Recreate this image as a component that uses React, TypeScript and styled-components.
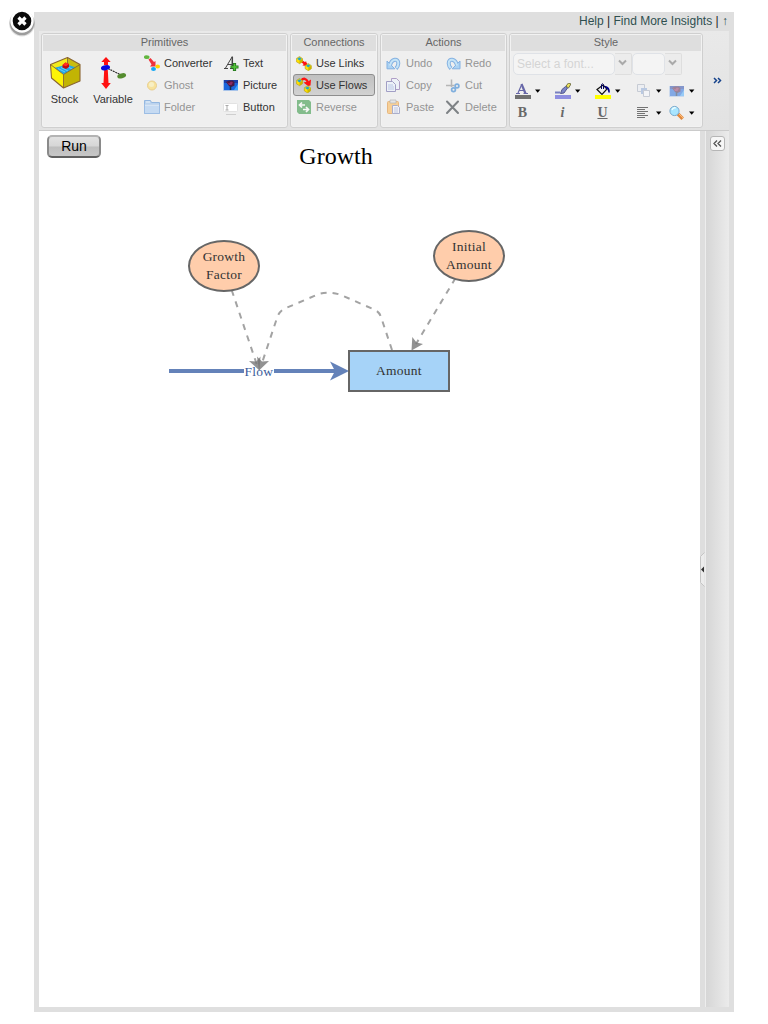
import React from "react";
import styled, { createGlobalStyle } from "styled-components";

const Global = createGlobalStyle`
  body { margin: 0; background: #fff; font-family: "Liberation Sans", Arial, sans-serif; }
  * { box-sizing: border-box; }
  svg { display: block; flex: none; }
`;

const Page = styled.div`
  position: relative;
  width: 768px;
  height: 1024px;
  padding: 12px 34px;
  overflow: hidden;
`;
const Close = styled.button`
  position: absolute;
  left: 7px;
  top: 7px;
  padding: 0;
  border: 0;
  background: none;
`;
const Frame = styled.div`
  width: 700px;
  height: 1000px;
  padding: 0 5px 5px;
  background: #dfdfdf;
  display: flex;
  flex-direction: column;
`;
const TopLinks = styled.div`
  height: 19px;
  line-height: 19px;
  padding-right: 2px;
  text-align: right;
  font-size: 12px;
  color: #222;
  white-space: pre;
`;
const Link = styled.a<{ $narrow?: boolean }>`
  color: #2f4f4f;
  letter-spacing: ${(p) => (p.$narrow ? "-1px" : "normal")};
`;
const Ribbon = styled.div`
  height: 100px;
  padding: 2px 0 0 2px;
  display: flex;
  gap: 2px;
  background: linear-gradient(#e9e9e9, #e2e2e2);
  border-bottom: 1px solid #cbcbcb;
`;
const Group = styled.section<{ $w: number }>`
  width: ${(p) => p.$w}px;
  height: 95px;
  padding: 1px;
  flex: none;
  border: 1px solid #cfcfcf;
  border-radius: 3px;
  background: #efefef;
  box-shadow: inset 0 0 0 1px #f2f2f2;
`;
const GroupTitle = styled.div`
  height: 16px;
  line-height: 15px;
  text-align: center;
  font-size: 11px;
  color: #666;
  background: #dedede;
`;
const Columns = styled.div<{ $pad?: number }>`
  display: flex;
  padding-top: 1px;
  padding-left: ${(p) => p.$pad ?? 0}px;
`;
const Column = styled.div<{ $w: number }>`
  width: ${(p) => p.$w}px;
  flex: none;
`;
const Tool = styled.button<{ $off?: boolean; $on?: boolean; $pad?: number }>`
  width: 100%;
  height: 22px;
  padding: 0 0 0 ${(p) => p.$pad ?? 3}px;
  display: flex;
  align-items: center;
  gap: 4px;
  border: 1px solid ${(p) => (p.$on ? "#8e8e8e" : "transparent")};
  border-radius: 3px;
  background: ${(p) => (p.$on ? "linear-gradient(#c0c0c0, #d2d2d2)" : "none")};
  color: ${(p) => (p.$off ? "#949494" : "#333")};
  font: 11px "Liberation Sans", Arial, sans-serif;
  white-space: nowrap;
  svg { opacity: ${(p) => (p.$off ? 0.55 : 1)}; }
`;
const BigTool = styled.button<{ $w: number }>`
  width: ${(p) => p.$w}px;
  height: 60px;
  padding: 4px 0 0;
  border: 0;
  background: none;
  display: flex;
  flex-direction: column;
  align-items: center;
  gap: 4px;
  flex: none;
  color: #333;
  font: 11px "Liberation Sans", Arial, sans-serif;
`;
const Combos = styled.div`
  display: flex;
  height: 22px;
  margin: 2px 0 5px 2px;
`;
const Field = styled.div<{ $w: number }>`
  width: ${(p) => p.$w}px;
  height: 22px;
  line-height: 21px;
  padding-left: 3px;
  border: 1px solid #dfe2e7;
  border-radius: 5px;
  background: #f4f4f4;
  color: #d4d4d4;
  font-size: 12px;
`;
const Trigger = styled.div`
  width: 17px;
  height: 22px;
  padding: 0 2px 2px 0;
  border: 1px solid #dedede;
  border-left: 0;
  border-radius: 0 2px 2px 0;
  background: #ececec;
  display: grid;
  place-items: center;
`;
const StyleRow = styled.div`
  height: 22px;
  padding: 0 0 0 4px;
  display: grid;
  grid-template-columns: 40px 40px 41px 33px 32px;
  align-items: center;
`;
const StyleTool = styled.div`
  display: flex;
  align-items: center;
  gap: 4px;
`;
const Letter = styled.span<{ $kind: "b" | "i" | "u" }>`
  width: 15px;
  text-align: center;
  color: #686868;
  font: bold 14px/16px "Liberation Serif", serif;
  font-style: ${(p) => (p.$kind === "i" ? "italic" : "normal")};
  text-decoration: ${(p) => (p.$kind === "u" ? "underline" : "none")};
`;
const More = styled.div`
  flex: 1;
  padding-bottom: 2px;
  display: grid;
  place-items: center;
`;
const Body = styled.div`
  flex: 1;
  display: flex;
`;
const Canvas = styled.main`
  position: relative;
  width: 661px;
  background: #fff;
`;
const RunButton = styled.button`
  position: absolute;
  left: 8px;
  top: 4px;
  width: 54px;
  height: 23px;
  padding: 0 0 1px;
  border: 2px solid #8a8a8a;
  border-top-color: #b4b4b4;
  border-bottom-color: #606060;
  border-radius: 5px;
  background: linear-gradient(#e2e2e2 0%, #d6d6d6 48%, #bebebe 52%, #c7c7c7 100%);
  color: #000;
  font: 14px/18px "Liberation Sans", Arial, sans-serif;
`;
const Heading = styled.div`
  position: absolute;
  left: 197px;
  top: 11px;
  width: 200px;
  text-align: center;
  color: #000;
  font: 24px/28px "Liberation Serif", serif;
`;
const Links = styled.svg`
  position: absolute;
  left: 0;
  top: 0;
`;
const Node = styled.div<{ $x: number; $y: number; $w: number; $h: number; $round?: boolean }>`
  position: absolute;
  left: ${(p) => p.$x}px;
  top: ${(p) => p.$y}px;
  width: ${(p) => p.$w}px;
  height: ${(p) => p.$h}px;
  display: grid;
  place-items: center;
  text-align: center;
  border: 2px solid #666;
  border-radius: ${(p) => (p.$round ? "50%" : "0")};
  background: ${(p) => (p.$round ? "#ffcdab" : "#a6d3f8")};
  color: #333;
  font: 13.5px/18px "Liberation Serif", serif;
  letter-spacing: 0.25px;
`;
const FlowLabel = styled.div`
  position: absolute;
  left: 205px;
  top: 233px;
  width: 30px;
  text-align: center;
  color: #3c5c9c;
  font: 13.5px/16px "Liberation Serif", serif;
  letter-spacing: 0.25px;
`;
const Splitter = styled.div`
  width: 6px;
  background: #dedede;
  border-right: 1px solid #ededed;
  display: flex;
  align-items: center;
`;
const SidePanel = styled.aside`
  flex: 1;
  padding: 5px 0 0 4px;
  background: linear-gradient(90deg, #d6d6d6, #ebebeb);
`;
const Expand = styled.button`
  width: 15px;
  height: 15px;
  padding: 0;
  display: grid;
  place-items: center;
  border: 1px solid #b6b6b6;
  border-radius: 3px;
  background: #f7f7f7;
`;

const StockIcon = () => (
  <svg width="32" height="33" viewBox="0 0 32 33" strokeLinejoin="round">
    <path d="M1.500 8.500 18.500 1.500V11L8 15.500Z" fill="#f2ea1c" />
    <path d="M18.500 1.500 31 8.500 25 15 18.500 11Z" fill="#c9bc10" />
    <path d="M5 12 18 8.500 28.500 12 14.500 18.500Z" fill="#22a7e6" />
    <path d="m9 12.500 7 3.500M12 11.500l7 3.500m-2-5 7 3.500" stroke="#7fd4f8" strokeWidth=".8" />
    <path d="M1.500 8.500 14.500 18.500V32L2.500 22Z" fill="#fdf405" />
    <path d="M14.500 18.500 31 8.500V25L14.500 32Z" fill="#c2b404" />
    <path d="M1.500 8.500 18.500 1.500 31 8.500V25L14.500 32 2.500 22Z" fill="none" stroke="#8a6532" strokeWidth="1.100" />
    <path d="M1.500 8.500 14.500 18.500 31 8.500M14.500 18.500V32M18.500 1.500V8" fill="none" stroke="#8a6532" strokeWidth=".9" />
    <path d="m13.500 9 3-2.500 3.500 1.500v3l-3 2-3.500-1.500Z" fill="#c50a0a" />
    <path d="m13.500 9 3-2.500 3.500 1.500-3 2.200Z" fill="#ff2d25" />
  </svg>
);
const VariableIcon = () => (
  <svg width="28" height="33" viewBox="0 0 28 33">
    <path d="m7 1 4.700 5H9v3H5V6H2.300Z" fill="#f11" />
    <path d="M5.200 14h3.600l.7 13h2.300L7 33 2.200 27h2.300Z" fill="#f11" />
    <path d="m9 12.500 12 6" stroke="#222" strokeWidth="1.100" strokeDasharray="2 .7" />
    <ellipse cx="6.500" cy="11.800" rx="4.600" ry="2.500" fill="#0909e0" transform="rotate(-12 6.500 11.800)" />
    <ellipse cx="22.700" cy="19.800" rx="4.500" ry="2.400" fill="#548c2e" transform="rotate(-14 22.700 19.800)" />
  </svg>
);
const ConverterIcon = () => (
  <svg width="16" height="16" viewBox="0 0 16 16">
    <ellipse cx="2.700" cy="2.200" rx="2.800" ry="1.900" fill="#62b63f" />
    <path d="m4.500 4.500 2-1.500 3.500 4 1.500-1v5.500H6l1.500-2Z" fill="#ee343b" />
    <ellipse cx="13.700" cy="11.500" rx="2.300" ry="1.900" fill="#ffd500" />
    <ellipse cx="9.500" cy="14" rx="2.500" ry="1.900" fill="#16a8f4" />
  </svg>
);
const GhostIcon = () => (
  <svg width="16" height="16" viewBox="0 0 16 16">
    <circle cx="8" cy="8.500" r="4.500" fill="#ffd95a" stroke="#e3b440" />
    <circle cx="7.500" cy="7.500" r="2.500" fill="#fff0a4" />
  </svg>
);
const FolderIcon = () => (
  <svg width="16" height="16" viewBox="0 0 16 16">
    <path d="M.5 14.500v-13h6l1 2h8v11Z" fill="#8fbdf0" stroke="#4a8ad4" />
    <path d="M.5 14.500v-9h15v9Z" fill="#a3c9f6" stroke="#5a95dc" />
    <path d="M1 6h14M2 3h4" stroke="#e8f4ff" />
  </svg>
);
const TextIcon = () => (
  <svg width="16" height="16" viewBox="0 0 16 16" fill="none">
    <path d="M1 13.500h4m2 0h3M2.500 13 9 2M5 9.500h4" stroke="#444" />
    <path d="M9.300 1.500v11" stroke="#444" strokeWidth="1.500" />
    <path d="M11.500 8v8M7.500 12h8" stroke="#23751d" strokeWidth="3.200" />
    <path d="M11.500 8.800v6.400M8.300 12h6.400" stroke="#55c43a" strokeWidth="1.600" />
  </svg>
);
const PictureIcon = () => (
  <svg width="16" height="16" viewBox="0 0 16 16">
    <path d="M1 3h14v10H1Z" fill="#1a66dc" />
    <path d="M1 3h14v3H1Z" fill="#1c3fa8" />
    <path d="m11 13 4-6v6Z" fill="#41a8ff" />
    <path d="M3 5 6 3.500h4l1.500 2v3L8.500 10 6 9Z" fill="#4a1a44" />
    <path d="m4 5 2 1.500L8 4.500l2 1L8.500 8H6Z" fill="#8d2a62" />
    <path d="M7.500 9v4" stroke="#172e50" strokeWidth="1.500" />
    <path d="M.5 3v10.500H15" fill="none" stroke="#a8c4ea" />
  </svg>
);
const ButtonIcon = () => (
  <svg width="16" height="16" viewBox="0 0 16 16">
    <rect x=".5" y="4.500" width="14" height="8" rx="1" fill="#fff" stroke="#e2e2e2" />
    <path d="M2.500 6.500h3M4 6.500v4.500M2.500 11h3" stroke="#aaa" fill="none" />
    <path d="M3 15.500h10" stroke="#cfcfcf" />
  </svg>
);
const Cube = ({ x, y }: { x: number; y: number }) => (
  <g transform={`translate(${x} ${y})`}>
    <path d="M.300 2 3.500 0l3 2v3.200L3.500 7.200.300 5.200Z" fill="#ffe000" stroke="#a08a20" strokeWidth=".5" />
    <path d="m1.200 2.300 2.300-1.500 2.200 1.500-2.200 1.800Z" fill="#1fa6cc" />
    <path d="m3.500 4.200 3-2v3l-3 2Z" fill="#c9b600" />
  </g>
);
const LinksIcon = () => (
  <svg width="16" height="16" viewBox="0 0 16 16">
    <path d="m4 5 7 5" stroke="#f11" strokeWidth="2.200" />
    <path d="m6.500 10.500 5 .5-1.500-5Z" fill="#f11" />
    <Cube x={0} y={1.500} />
    <Cube x={8.800} y={8.500} />
  </svg>
);
const FlowsIcon = () => (
  <svg width="16" height="16" viewBox="0 0 16 16">
    <path d="M5 3.500Q9-.5 12 5" stroke="#f11" strokeWidth="2.400" fill="none" />
    <path d="m7.500 5.500 4.500-1 3-2-.5 6-2.500.500Z" fill="#f11" />
    <Cube x={0} y={1.500} />
    <Cube x={8} y={8.700} />
  </svg>
);
const ReverseIcon = () => (
  <svg width="16" height="16" viewBox="0 0 16 16">
    <path d="M1 1h12l2 2v12H3l-2-2Z" fill="#2c943d" />
    <path d="M9 6H3.500M6 3.500 3.500 6 6 8.500M7 10.500h5.500M10 8l2.500 2.500L10 13" stroke="#fff" strokeWidth="1.700" fill="none" />
  </svg>
);
const UndoIcon = ({ flip }: { flip?: boolean }) => (
  <svg width="16" height="16" viewBox="0 0 16 16">
    <g transform={flip ? "translate(16 0) scale(-1 1)" : undefined} fill="none">
      <path d="M4 10.500C5.500 3.500 12.500 3 12.300 8.500 12.200 10.500 11.500 12 10 13.500" stroke="#2f80d8" strokeWidth="4" />
      <path d="M1 6v7.800h7.800Z" fill="#74bcf7" stroke="#2f80d8" />
      <path d="M4 10.500C5.500 3.500 12.500 3 12.300 8.500 12.200 10.500 11.500 12 10.300 13" stroke="#a4dcff" strokeWidth="2" />
    </g>
  </svg>
);
const CopyIcon = () => (
  <svg width="16" height="16" viewBox="0 0 16 16" fill="#edf3ff" stroke="#635ca3">
    <path d="M5.500 1.500h5l3 3v8h-8Z" stroke="#7d5fa8" />
    <path d="M.5 4.500h6l3 3v7h-9Z" />
    <path d="M2 8h5M2 10h6M2 12h6" stroke="#8ea9df" />
  </svg>
);
const PasteIcon = () => (
  <svg width="16" height="16" viewBox="0 0 16 16">
    <rect x="1.500" y="2.500" width="11" height="12" rx="1" fill="#ffb54e" stroke="#e08a28" />
    <path d="M4 1h6v3H4Z" fill="#ddd" stroke="#888" strokeWidth=".7" />
    <path d="M6.500 6.500h5l2 2v6h-7Z" fill="#f5f6ff" stroke="#737aaf" />
    <path d="M8 9h4M8 11h4M8 13h4" stroke="#97a5d1" />
  </svg>
);
const CutIcon = () => (
  <svg width="16" height="16" viewBox="0 0 16 16" fill="none">
    <path d="M6.500 2.500V10M1 8.500h8.500" stroke="#888" strokeWidth="1.500" />
    <circle cx="12" cy="9" r="1.900" stroke="#267bd0" strokeWidth="1.700" />
    <circle cx="8.500" cy="12.800" r="1.900" stroke="#267bd0" strokeWidth="1.700" />
  </svg>
);
const DeleteIcon = () => (
  <svg width="16" height="16" viewBox="0 0 16 16">
    <path d="m2 2.500 11 11.500M13 2.500 2 14" stroke="#222a30" strokeWidth="2" strokeLinecap="round" />
  </svg>
);
const Arrow = () => (
  <svg width="6" height="4" viewBox="0 0 6 4">
    <path d="M0 .500h5.400L2.700 3.700Z" fill="#000" />
  </svg>
);
const Chevron = () => (
  <svg width="9" height="8" viewBox="0 0 9 8">
    <path d="m1 1.500 3.500 3.500L8 1.500" fill="none" stroke="#aaa" strokeWidth="2" />
  </svg>
);
const FontColorIcon = () => (
  <svg width="16" height="16" viewBox="0 0 16 16" fill="none">
    <path d="M1 10.500h4m3.500 0h4.500M3 10 6.700 1.500M4.500 7.500h5" stroke="#6767a8" strokeWidth="1.200" />
    <path d="m6.500 1 4 9.500" stroke="#6767a8" strokeWidth="2.200" />
    <path d="M0 14h16" stroke="#707070" strokeWidth="4" />
  </svg>
);
const PenIcon = () => (
  <svg width="16" height="16" viewBox="0 0 16 16" fill="none">
    <path d="M0 9.500h5" stroke="#777fc0" strokeWidth="2" />
    <path d="m5.500 10.500 1.500-4 3.500-3 2 1.500-3.500 5Z" fill="#7d86c8" stroke="#50558d" />
    <path d="m11 3 2.500-3L16 1l-2.500 4Z" fill="#eee35d" stroke="#55552d" strokeWidth=".8" />
    <path d="M0 14h16" stroke="#8e8ee0" strokeWidth="4" />
  </svg>
);
const BucketIcon = () => (
  <svg width="16" height="16" viewBox="0 0 16 16" fill="none">
    <path d="m2 6.500 6-4.500 4 4-5 5.500Z" fill="#eee" stroke="#111" strokeWidth="1.200" />
    <path d="M6.500 6V1.500q1-1.500 2 0V6" stroke="#000060" />
    <path d="M10.500 3.500q4 .5 3.700 6L13 6l-1.500-1Z" fill="#000085" stroke="#000085" strokeWidth="1.200" />
    <path d="M0 14h16" stroke="#ff0" strokeWidth="4" />
  </svg>
);
const LayersIcon = () => (
  <svg width="16" height="16" viewBox="0 0 16 16">
    <path d="M1.500 1.500h7v7h-7Z" fill="#eceef2" stroke="#c6cbd4" />
    <path d="M5 5h6v6H5Z" fill="#b9c9e2" />
    <path d="M7.500 7.500h6v6h-6Z" fill="#f3f4f7" stroke="#c6cbd4" />
  </svg>
);
const AlignIcon = () => (
  <svg width="16" height="14" viewBox="0 0 16 14">
    <path d="M1 1.500h11M1 3.500h8M1 5.500h11M1 7.500h8M1 9.500h11M1 11.500h8" stroke="#737373" />
  </svg>
);
const SearchIcon = () => (
  <svg width="16" height="16" viewBox="0 0 16 16">
    <path d="m9 9 4.700 4.700" stroke="#e18a3e" strokeWidth="3.500" />
    <path d="m10 9 4 4" stroke="#ffbd7b" />
    <circle cx="5.500" cy="6" r="4.600" fill="#a8e5ff" stroke="#7aa9cc" />
    <path d="M3 5q1-3 4-2" stroke="#efffff" fill="none" strokeWidth="1.300" />
  </svg>
);
const FadedPicture = styled.span`
  opacity: 0.5;
`;

export default function App() {
  return (
    <Page>
      <Global />
      <Frame>
        <TopLinks>
          <Link>Help</Link> | <Link>Find More Insights</Link> | <Link $narrow>↑</Link>
        </TopLinks>
        <Ribbon>
          <Group $w={247}>
            <GroupTitle>Primitives</GroupTitle>
            <Columns>
              <BigTool $w={43}><StockIcon />Stock</BigTool>
              <BigTool $w={54}><VariableIcon />Variable</BigTool>
              <Column $w={79}>
                <Tool><ConverterIcon />Converter</Tool>
                <Tool $off><GhostIcon />Ghost</Tool>
                <Tool $off><FolderIcon />Folder</Tool>
              </Column>
              <Column $w={65}>
                <Tool><TextIcon />Text</Tool>
                <Tool><PictureIcon />Picture</Tool>
                <Tool><ButtonIcon />Button</Tool>
              </Column>
            </Columns>
          </Group>
          <Group $w={88}>
            <GroupTitle>Connections</GroupTitle>
            <Columns $pad={1}>
              <Column $w={82}>
                <Tool $pad={2}><LinksIcon />Use Links</Tool>
                <Tool $pad={2} $on><FlowsIcon />Use Flows</Tool>
                <Tool $pad={2} $off><ReverseIcon />Reverse</Tool>
              </Column>
            </Columns>
          </Group>
          <Group $w={127}>
            <GroupTitle>Actions</GroupTitle>
            <Columns>
              <Column $w={59}>
                <Tool $off><UndoIcon />Undo</Tool>
                <Tool $off><CopyIcon />Copy</Tool>
                <Tool $off><PasteIcon />Paste</Tool>
              </Column>
              <Column $w={62}>
                <Tool $off><UndoIcon flip />Redo</Tool>
                <Tool $off><CutIcon />Cut</Tool>
                <Tool $off><DeleteIcon />Delete</Tool>
              </Column>
            </Columns>
          </Group>
          <Group $w={194}>
            <GroupTitle>Style</GroupTitle>
            <Combos>
              <Field $w={102}>Select a font...</Field>
              <Trigger><Chevron /></Trigger>
              <Field $w={33} />
              <Trigger><Chevron /></Trigger>
            </Combos>
            <StyleRow>
              <StyleTool><FontColorIcon /><Arrow /></StyleTool>
              <StyleTool><PenIcon /><Arrow /></StyleTool>
              <StyleTool><BucketIcon /><Arrow /></StyleTool>
              <StyleTool><LayersIcon /><Arrow /></StyleTool>
              <StyleTool><FadedPicture><PictureIcon /></FadedPicture><Arrow /></StyleTool>
            </StyleRow>
            <StyleRow>
              <StyleTool><Letter $kind="b">B</Letter></StyleTool>
              <StyleTool><Letter $kind="i">i</Letter></StyleTool>
              <StyleTool><Letter $kind="u">U</Letter></StyleTool>
              <StyleTool><AlignIcon /><Arrow /></StyleTool>
              <StyleTool><SearchIcon /><Arrow /></StyleTool>
            </StyleRow>
          </Group>
          <More>
            <svg width="9" height="7" viewBox="0 0 9 7">
              <path d="m1 1 2.500 2.500L1 6M5 1l2.500 2.500L5 6" fill="none" stroke="#15428b" strokeWidth="1.500" />
            </svg>
          </More>
        </Ribbon>
        <Body>
          <Canvas>
            <Links width="661" height="300" viewBox="39 131 661 300" fill="none">
              <path d="M169 371H244M274 371H338" stroke="#6482b9" strokeWidth="4" />
              <path d="M349 371 330 361.500 335 371 330 380.500Z" fill="#6482b9" />
              <g stroke="#a3a3a3" strokeWidth="2" strokeDasharray="6 6">
                <path d="m232 291 25 74" strokeDashoffset="1" />
                <path d="m455 279-39 65" strokeDashoffset="1" />
                <path d="M392 350 381 317Q379 311 373 309L341 295Q330 291 319 294L286 308Q279 311 277 318L261 366" />
              </g>
              <g fill="#777" fillOpacity=".8">
                <path d="m411.500 350.500.800-13.500 4.200 5.500 6.500 1.500Z" />
                <path d="m259.500 370.500-10.500-9.500 7.500.500 4-5Z" />
                <path d="m259 370.500 10-9.500-7 .500-5-5Z" />
              </g>
            </Links>
            <RunButton>Run</RunButton>
            <Heading>Growth</Heading>
            <Node $x={149} $y={109} $w={72} $h={52} $round>Growth<br />Factor</Node>
            <Node $x={394} $y={99} $w={72} $h={52} $round>Initial<br />Amount</Node>
            <Node $x={309} $y={219} $w={102} $h={42}>Amount</Node>
            <FlowLabel>Flow</FlowLabel>
          </Canvas>
          <Splitter>
            <svg width="5" height="35" viewBox="0 0 5 35">
              <path d="M4.500.500.500 4.500v26l4 4" fill="#ececec" stroke="#c5c5c5" />
              <path d="M4 14.500v6L1 17.500Z" fill="#333" />
            </svg>
          </Splitter>
          <SidePanel>
            <Expand>
              <svg width="9" height="7" viewBox="0 0 9 7">
                <path d="M4 .500 1 3.500l3 3M8 .500l-3 3 3 3" fill="none" stroke="#555" strokeWidth="1.300" />
              </svg>
            </Expand>
          </SidePanel>
        </Body>
      </Frame>
      <Close aria-label="Close">
        <svg width="30" height="32" viewBox="0 0 30 32">
          <circle cx="15" cy="16.500" r="13" fill="#000" opacity=".12" />
          <circle cx="15" cy="16" r="12.300" fill="#000" opacity=".3" />
          <circle cx="15" cy="14" r="10.500" fill="#0b0b0b" stroke="#fff" strokeWidth="2.400" />
          <path d="m11.500 10.500 7 7m0-7-7 7" stroke="#fff" strokeWidth="3.200" />
        </svg>
      </Close>
    </Page>
  );
}
